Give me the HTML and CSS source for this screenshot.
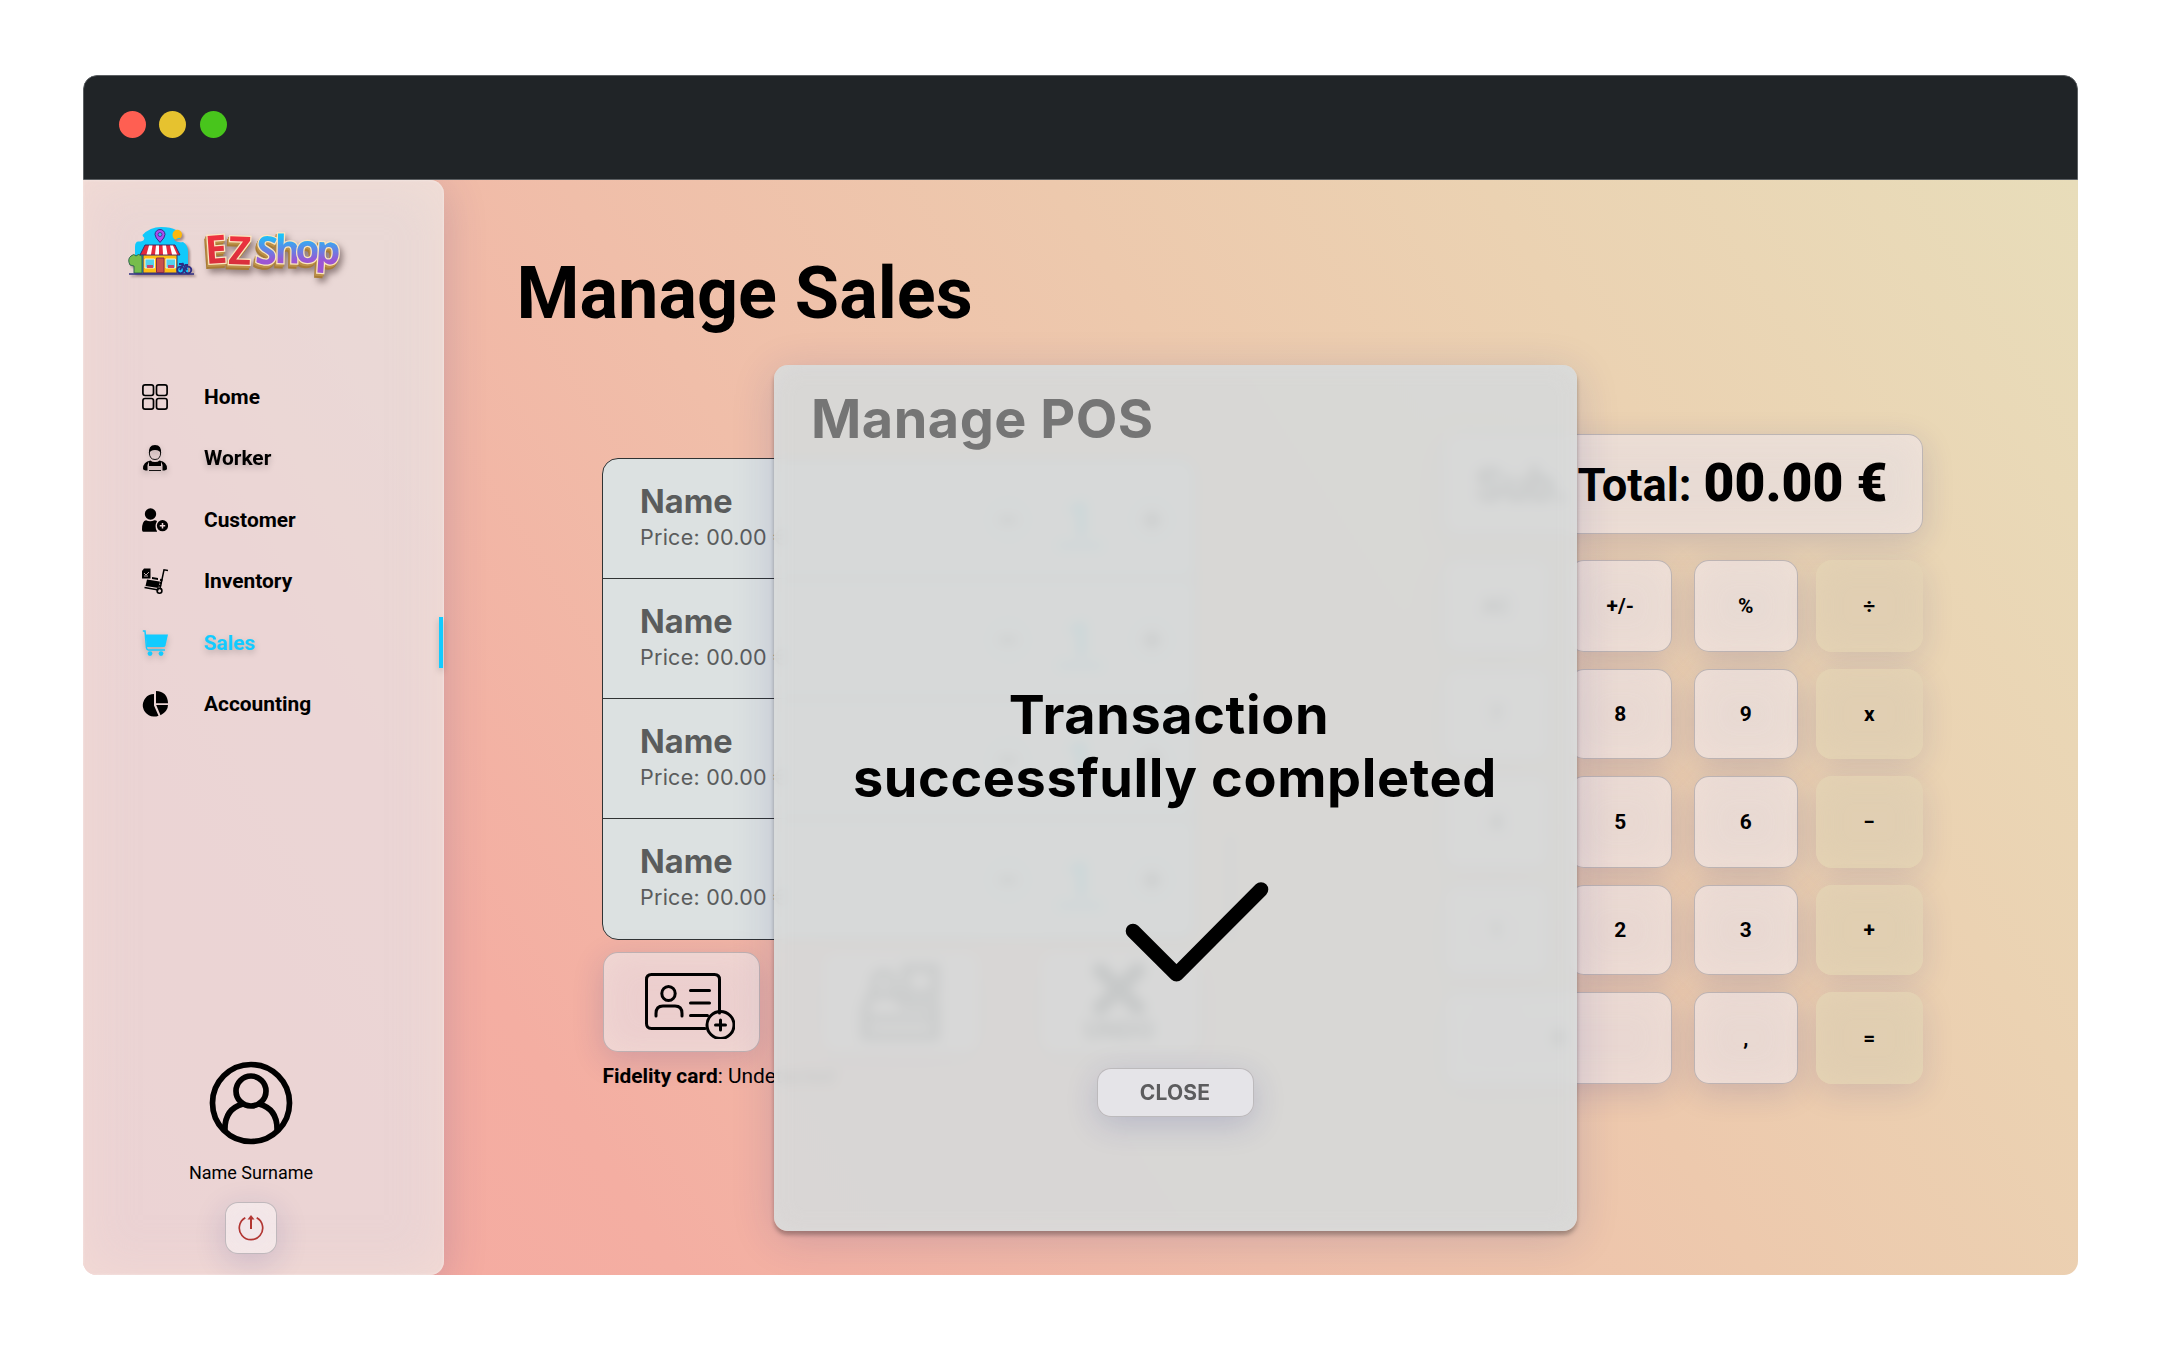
FILE: index.html
```html
<!DOCTYPE html>
<html lang="en">
<head>
<meta charset="utf-8">
<title>EZShop - Manage Sales</title>
<link rel="stylesheet" href="styles.css">
</head>
<body>
<div class="window">
  <header class="titlebar">
    <span class="dot dot-red"></span><span class="dot dot-yellow"></span><span class="dot dot-green"></span>
  </header>
  <div class="app">
    <aside class="sidebar">
      <svg class="logo" viewBox="0 0 216 56" width="216" height="56">
        <defs>
          <linearGradient id="red" x1="0" y1="0" x2="0" y2="1"><stop offset="0" stop-color="#fb3340"/><stop offset="1" stop-color="#cf2f3b"/></linearGradient>
          <linearGradient id="blue" x1="0" y1="0" x2="0" y2="1"><stop offset=".25" stop-color="#15c5fb"/><stop offset=".72" stop-color="#9b55d3"/></linearGradient>
        </defs>
        <g class="logo-shop">
          <path d="M7 46V20q0-6 4-5.500 4 0 5-2 1-2-1-3l-.5-1.500Q22 0 33 0q10 0 15 3l4 9q-4-1-6 1 3 3 9 2 5 3 5 10v21z" fill="#12c9fb"/>
          <path d="M44.500 7.500a4.700 4.700 0 0 1 9.500 0q0 2-1.500 3.500-2-1-5 1.500-3-1-3-5z" fill="#fbb90e"/>
          <path d="M32 2.500a5 5 0 0 1 5 5q0 3-5 8-5-5-5-8a5 5 0 0 1 5-5z" fill="#a94df0" stroke="#3a2b86" stroke-width="1"/>
          <circle cx="32" cy="7.500" r="2" fill="#2ac4fa" stroke="#3a2b86" stroke-width=".8"/>
          <path d="M15 27h34v19H15z" fill="#fdbe12" stroke="#33306f" stroke-width="1"/>
          <path d="M17 18h30l5 10H12z" fill="#e5283b" stroke="#33306f" stroke-width="1"/>
          <path d="M21 18.500h3.500l-1.500 9h-4.500zM28 18.500h3v9h-4zM34.500 18.500H38l1.500 9H35zM42 18.500h3l4 9h-5z" fill="#fff"/>
          <path d="M28.500 31h7.500v14.500h-7.500z" fill="#c9504a" stroke="#842d4b" stroke-width="1"/>
          <path d="M17 32h9.500v9H17zM38 32h9.500v9H38z" fill="#53d2ee" stroke="#f7f0d8" stroke-width="1"/>
          <path d="M19 38h6v3h-6zM40 38h6v3h-6z" fill="#c04675"/>
          <path d="M2 38q-3-6 1-9 3-3 5 0 2-3 6 0v17H6v-7z" fill="#77bd4b" stroke="#2e6950" stroke-width="1"/>
          <circle cx="52.500" cy="43" r="3.300" fill="none" stroke="#2d2c83" stroke-width="1.800"/>
          <circle cx="60" cy="43" r="3.300" fill="none" stroke="#2d2c83" stroke-width="1.800"/>
          <path d="M52 43l3-6 4 6M51 37h4M57 38h3" fill="none" stroke="#2d2c83" stroke-width="1.800"/>
          <path d="M1 47h65" stroke="#2d2c83" stroke-width="1.600"/>
        </g>
        <g class="logo-word">
          <text x="78 100" y="37" rotate="-4 2" fill="url(#red)">EZ</text>
          <text x="126.500 146.500 167.500 187" y="36" rotate="6 1 0 4" fill="url(#blue)">Shop</text>
        </g>
      </svg>
      <nav class="nav">
        <a class="nav-item">
          <svg viewBox="0 0 26 26"><g fill="none" stroke="#000" stroke-width="1.700"><rect x=".9" y=".9" width="10.600" height="10.600" rx="2.200"/><rect x="14.500" y=".9" width="10.600" height="10.600" rx="2.200"/><rect x=".9" y="14.500" width="10.600" height="10.600" rx="2.200"/><rect x="14.500" y="14.500" width="10.600" height="10.600" rx="2.200"/></g></svg>
          <span>Home</span></a>
        <a class="nav-item raised">
          <svg viewBox="0 0 26 26"><path d="M7 9Q6 0 13 0t6 9q-1-4-6-4t-6 4z"/><path d="M7.300 7q0 7.500 5.700 7.500T18.700 7" fill="none" stroke="#000" stroke-width=".9"/><path d="M8.500 15.500q1.500 1.500 4.500 1.500t4.500-1.500q7.500 1.500 7.500 8 0 2-4.500 2V20L19 16.500V21H7v-4.500L5.500 20v5.500Q1 25.500 1 23.500q0-6.500 7.500-8z"/><path d="M7 20h12M7 25.500h12" stroke="#000" stroke-width=".9"/></svg>
          <span>Worker</span></a>
        <a class="nav-item">
          <svg viewBox="0 0 26 26"><circle cx="8.500" cy="7" r="5.700"/><path d="M4 13.300q4 2 8.500 0 2 0 2.500 1-3 5 0 10v.5H1.500Q0 25 0 22.500 0 14 4 13.300z"/><circle cx="20.500" cy="18.700" r="5.600"/><path d="M20.500 16v5.400M17.800 18.700h5.400" stroke="#ecd6d7" stroke-width="1.500"/></svg>
          <span>Customer</span></a>
        <a class="nav-item">
          <svg viewBox="0 0 26 26"><path d="M2 .5h6.500v10H0V3z"/><path d="M2 5l2 2 3-3M2 8h4" stroke="#ecd6d7" stroke-width=".8" fill="none"/><path d="M5 11.500l12.500 2-1 6.500-13-2zM10 9l6 1v2l-6-1z"/><path d="M2.500 19.500l14 2.500M26 2.500l-4-.7-3.800 18" fill="none" stroke="#000" stroke-width="1.500"/><path d="M19.500 11l-2 8" stroke="#000" stroke-width="2.500" stroke-dasharray="2 1"/><circle cx="17.500" cy="22.800" r="2.400" fill="none" stroke="#000" stroke-width="1.600"/></svg>
          <span>Inventory</span></a>
        <a class="nav-item raised active">
          <svg viewBox="0 0 26 26"><path d="M3.600 4.500H26l-2.500 11q-.5 1.500-2 1.500H5z"/><path d="M.8 1H3l1.500 17q.3 2 2 2H23" fill="none" stroke="#12cbff" stroke-width="1.500"/><circle cx="8" cy="23.600" r="2.400"/><circle cx="19" cy="23.600" r="2.400"/></svg>
          <span>Sales</span></a>
        <a class="nav-item">
          <svg viewBox="0 0 26 26"><path d="M12 3v11.500l4.500 10.200A11.300 11.300 0 1 1 12 3z"/><path d="M14 0q11.500.5 12 12.300H14z"/><path d="M14.200 14H26q0 6-7.500 10.300z"/></svg>
          <span>Accounting</span></a>
      </nav>
      <div class="profile">
        <svg viewBox="0 0 84 84" width="84" height="84"><g fill="none" stroke="#000" stroke-width="5.700"><circle cx="42" cy="42" r="38.500"/><circle cx="42" cy="30" r="15"/><path d="M16 70Q15 48 34 43M68 70Q69 48 50 43"/></g></svg>
        <span class="username">Name Surname</span>
        <button class="glass power"><svg viewBox="0 0 26 26" width="26" height="26"><g fill="none" stroke="#b23632" stroke-width="1.700"><path d="M7.300 2.800a11.700 11.700 0 1 0 11.400 0"/><path d="M13 14V2" stroke-width="2"/></g><path d="M13 0l3.500 4.500h-7z" fill="#b23632"/></svg></button>
      </div>
    </aside>
    <main class="main">
      <h1>Manage Sales</h1>
      <div class="workspace">
        <section class="cart">
          <div class="list-wrap">
            <ul class="list">
              <li><div><b>Name</b><span>Price: 00.00 €</span></div><div class="qty"><i class="minus"></i><u>1</u><i class="plus"></i></div></li>
              <li><div><b>Name</b><span>Price: 00.00 €</span></div><div class="qty"><i class="minus"></i><u>1</u><i class="plus"></i></div></li>
              <li><div><b>Name</b><span>Price: 00.00 €</span></div><div class="qty"><i class="minus"></i><u>1</u><i class="plus"></i></div></li>
              <li><div><b>Name</b><span>Price: 00.00 €</span></div><div class="qty"><i class="minus"></i><u>1</u><i class="plus"></i></div></li>
            </ul>
            <span class="scroll"></span>
          </div>
          <div class="actions">
            <button class="glass"><svg class="card-icon" viewBox="0 0 92 68" width="92" height="68"><g fill="none" stroke="#000" stroke-width="3" stroke-linecap="round"><path d="M62 57.500H8.500q-5 0-5-5v-44q0-5 5-5h63q5 0 5 5V42"/><ellipse cx="25.500" cy="22.500" rx="6.700" ry="7"/><path d="M13 45v-2.500q0-7.500 7-7.500h12q7 0 7 7.500V45M47.500 19.500h19M47.500 32h19M47.500 44.500h17"/><circle cx="77.500" cy="54" r="13.500"/><path d="M72.500 54h10M77.500 49v10"/></g></svg></button>
            <button class="glass"><svg viewBox="0 0 80 78" width="80" height="78"><g fill="none" stroke="#000" stroke-width="9" opacity=".75"><path d="M46 5h29v26H46zM15 30V18q0-8 9-8t9 8v12M5 73V48l6-16h26l6 10h33v31zM5 56h72"/></g></svg></button>
            <button class="glass undo"><svg viewBox="0 0 56 56" width="56" height="56"><path d="M9 9l38 38M47 9L9 47" stroke="#000" stroke-width="15" stroke-linecap="round"/></svg>UNDO</button>
          </div>
          <p class="fidelity"><b>Fidelity card</b>: Undetected</p>
        </section>
        <section class="calculator">
          <div class="glass total"><span>Sub. Total:</span> <strong>00.00 €</strong></div>
          <div class="keys">
            <button class="glass">AC</button><button class="glass">+/-</button><button class="glass">%</button><button class="op">÷</button>
            <button class="glass">7</button><button class="glass">8</button><button class="glass">9</button><button class="op">x</button>
            <button class="glass">4</button><button class="glass">5</button><button class="glass">6</button><button class="op">−</button>
            <button class="glass">1</button><button class="glass">2</button><button class="glass">3</button><button class="op">+</button>
            <button class="glass zero">0</button><button class="glass">,</button><button class="op">=</button>
          </div>
        </section>
      </div>
      <div class="modal">
        <h2>Manage POS</h2>
        <p class="message"><span class="first-line">Transaction</span><br>successfully completed</p>
        <svg class="check" viewBox="0 0 144 102" width="144" height="102"><path d="M8 50l43.500 43.300L136 8.500" fill="none" stroke="#000" stroke-width="14.600" stroke-linecap="round" stroke-linejoin="round"/></svg>
        <button class="glass close">CLOSE</button>
      </div>
    </main>
  </div>
</div>
</body>
</html>
```
FILE: styles.css
```css
* { box-sizing: border-box; }
body { margin: 0; padding-top: 75px; background: #fff; color: #000; font-family: Roboto, "Liberation Sans", sans-serif; }
h1, h2, p, ul { margin: 0; padding: 0; font-weight: inherit; }
button { font: inherit; color: inherit; padding: 0; }

.window { width: 1995px; margin: 0 auto; border-radius: 14px; overflow: hidden; }
.titlebar { position: relative; z-index: 1; height: 105px; padding: 0 0 7px 35px; display: flex; align-items: center; gap: 13.500px; background: #202427; border: 1px solid #5b5f62; border-radius: 14px 14px 0 0; }
.dot { width: 27px; height: 27px; border-radius: 50%; }
.dot-red { background: #ff5f52; }
.dot-yellow { background: #e6c22f; }
.dot-green { background: #48c51c; }
.app { height: 1095px; display: flex; background: linear-gradient(57deg, #f6a8a0 0%, #f4aea2 22%, #f0bea9 44%, #edc9ad 62%, #ebd2b2 78%, #e8ddba 100%); }

.sidebar { width: 361px; flex: none; display: flex; flex-direction: column; padding-top: 47px; border-radius: 0 14px 14px 0; background: rgba(229, 237, 243, .62); box-shadow: inset 0 0 50px rgba(252, 226, 214, .5), inset 0 0 2px 1px rgba(255, 255, 255, .3), 0 8px 44px rgba(60, 50, 130, .2); }
.logo { margin-left: 45px; flex: none; overflow: visible; }
.logo-shop { filter: drop-shadow(2px 2px 1px rgba(90, 60, 60, .5)); }
.logo-word text { font: 700 39px "Open Sans", sans-serif; stroke: #fbe6c0; stroke-width: 2.500px; paint-order: stroke; }
.logo-word { filter: drop-shadow(-1px 2px 0 #bd9148) drop-shadow(-1px 2px 0 #a87b35) drop-shadow(3px 4px 3px rgba(60, 40, 40, .5)); }
.nav { margin-top: 83px; }
.nav-item { height: 61.500px; display: flex; align-items: center; gap: 36.500px; padding-left: 59px; font-size: 20.900px; font-weight: 700; }
.nav-item svg { width: 26px; height: 26px; }
.raised { filter: drop-shadow(0 3px 3px rgba(0, 0, 0, .2)); }
.active { color: #12cbff; fill: #12cbff; position: relative; }
.active::after { content: ""; position: absolute; right: 1px; top: 4.500px; width: 3.500px; height: 51.500px; background: #12cbff; }
.profile { width: 337px; margin-top: auto; padding-bottom: 21px; display: flex; flex-direction: column; align-items: center; }
.username { margin: 17px 0 19px; font-size: 18px; line-height: 21px; }

.glass { display: flex; align-items: center; justify-content: center; border: 1.500px solid rgba(160, 155, 158, .6); border-radius: 15px; background: rgba(231, 224, 233, .62); box-shadow: inset 0 0 34px rgba(255, 236, 220, .35), 0 8px 32px rgba(31, 38, 135, .16); }
.power { width: 52px; height: 52px; border-radius: 13px; background: rgba(242, 236, 244, .7); }

.main { flex: 1; position: relative; padding: 70px 155px 0 0; }
h1 { height: 87px; margin-left: 73px; font-size: 72px; line-height: 87px; font-weight: 700; white-space: nowrap; }
.workspace { display: flex; justify-content: space-between; margin-left: 158px; padding-top: 97px; }
.cart { width: 650px; padding-top: 24px; }
.list-wrap { display: flex; align-items: flex-end; gap: 31px; }
.list { list-style: none; width: 594px; border: 1.300px solid #303333; border-radius: 16px; background: #dce1e1; overflow: hidden; font-family: Inter, sans-serif; color: #5a5c5c; }
.list li { height: 120px; display: flex; justify-content: space-between; padding: 23px 21px 0 37.500px; border-bottom: 1.300px solid #303333; }
.list li:last-child { border-bottom: 0; }
.list b { display: block; font-size: 32.500px; line-height: 40px; font-weight: 700; }
.list span { display: block; font-size: 21.500px; line-height: 31px; letter-spacing: .25px; white-space: nowrap; }
.qty { display: flex; gap: 28px; font: 700 48px/44px Roboto, sans-serif; padding-top: 16px; text-align: center; }
.qty i { width: 44px; height: 44px; border-radius: 50%; border: 2px solid #b3b8ba; }
.minus { background: linear-gradient(#444, #444) center / 16px 6px no-repeat; }
.plus { background: linear-gradient(#444, #444) center / 18px 6px no-repeat, linear-gradient(#444, #444) center / 6px 18px no-repeat; }
.qty u { width: 44px; color: #12b8e8; text-decoration: none; border-bottom: 5px solid #4cb9dc; height: 50px; }
.scroll { width: 7px; height: 105px; background: #a5a8ae; border-radius: 4px; }
.actions { display: flex; gap: 62px; margin: 12px 0 0 1px; }
.actions .glass { width: 157px; height: 100px; }
.actions .undo { flex-direction: column; font-size: 26px; font-weight: 900; line-height: 26px; }
.actions .card-icon { margin: 6px 0 0 16px; }
.fidelity { margin: 12px 0 0 1px; font-size: 20.900px; line-height: 24px; white-space: nowrap; }

.calculator { width: 478px; flex: none; }
.total { height: 100px; gap: 12px; font-weight: 700; font-size: 45.300px; padding: 2px 4px 0 0; align-items: baseline; line-height: 93px; white-space: nowrap; }
.total strong { font-size: 53.300px; }
.keys { display: grid; grid-template-columns: 124px 125.500px 122px 106.500px; grid-template-rows: 92px 90px 92px 90px 92px; row-gap: 17px; margin-top: 25.500px; font-size: 20.900px; font-weight: 700; }
.keys .glass { width: 103.500px; }
.keys .zero { grid-column: span 2; width: 227.500px; }
.op { border: 0; border-radius: 16px; background: rgba(224, 206, 179, .9); box-shadow: inset 0 0 30px rgba(232, 215, 182, .6), 0 8px 32px rgba(31, 38, 135, .13); }

.modal { position: absolute; left: 330px; top: 184.500px; width: 803px; height: 866px; display: flex; flex-direction: column; align-items: center; border-radius: 14px; background: rgba(214, 216, 216, .93); backdrop-filter: blur(6px); box-shadow: 0 4px 4px rgba(0, 0, 0, .28), 0 8px 44px rgba(31, 38, 135, .16), inset 0 0 24px rgba(225, 225, 225, .4); font-family: Inter, sans-serif; }
.modal h2 { align-self: flex-start; margin: 21px 0 0 37.500px; font-size: 54px; line-height: 66px; font-weight: 700; letter-spacing: .5px; color: #757575; }
.message { margin-top: 231px; font-size: 54px; line-height: 63px; font-weight: 700; letter-spacing: .6px; text-align: center; white-space: nowrap; }
.first-line { padding-right: 12px; }
.check { margin: 72px 0 0 43px; }
.modal .close { width: 157px; height: 49px; margin-top: 85.500px; border-radius: 14px; font-size: 21px; font-weight: 700; letter-spacing: .2px; color: #5c5c5e; background: rgba(234, 232, 238, .75); box-shadow: 0 8px 32px rgba(31, 38, 135, .18); }
```
